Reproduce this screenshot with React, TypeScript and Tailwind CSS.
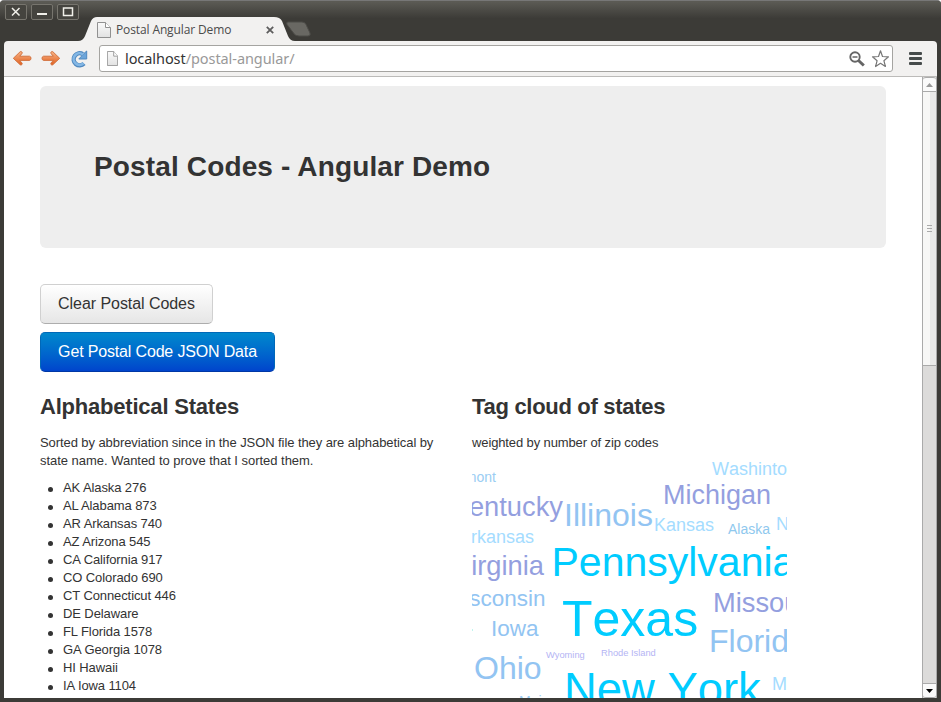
const states = [
  'AK Alaska 276', 'AL Alabama 873', 'AR Arkansas 740', 'AZ Arizona 545', 'CA California 917',
  'CO Colorado 690', 'CT Connecticut 446', 'DE Delaware', 'FL Florida 1578', 'GA Georgia 1078',
  'HI Hawaii', 'IA Iowa 1104',
];

type Tag = { t: string; x: number; y: number; s: number; c: string; end?: boolean };

const tags: Tag[] = [
  { t: 'Vermont', x: 24, y: 32, s: 14, c: '#9bcdf3', end: true },
  { t: 'Washinton', x: 240, y: 25, s: 18, c: '#a4dcff' },
  { t: 'Kentucky', x: 91, y: 66, s: 27.3, c: '#949fdf', end: true },
  { t: 'Michigan', x: 191, y: 54, s: 27, c: '#949fdf' },
  { t: 'Illinois', x: 92, y: 76, s: 32, c: '#92c4f2' },
  { t: 'Kansas', x: 182, y: 81, s: 18, c: '#a4dcff' },
  { t: 'Alaska', x: 256, y: 84, s: 14, c: '#8fc8ee' },
  { t: 'Nevada', x: 304, y: 80, s: 18, c: '#a4dcff' },
  { t: 'Arkansas', x: 62, y: 93, s: 18, c: '#a4dcff', end: true },
  { t: 'Virginia', x: 72, y: 125, s: 27.3, c: '#949fdf', end: true },
  { t: 'Pennsylvania', x: 79.5, y: 126, s: 41, c: '#00ccff' },
  { t: 'Wisconsin', x: 73.5, y: 156, s: 22.5, c: '#92c4f2', end: true },
  { t: 'Texas', x: 90, y: 186, s: 50, c: '#00ccff' },
  { t: 'Missouri', x: 241, y: 162, s: 27.3, c: '#949fdf' },
  { t: 'Iowa', x: 19, y: 186, s: 22.5, c: '#92c4f2' },
  { t: 'Florida', x: 237, y: 202, s: 32, c: '#92c4f2' },
  { t: 'Wyoming', x: 74, y: 208, s: 9.3, c: '#b4b4f4' },
  { t: 'Rhode Island', x: 129, y: 206, s: 9.3, c: '#b4b4f4' },
  { t: 'Ohio', x: 2, y: 229, s: 32, c: '#92c4f2' },
  { t: 'New York', x: 92, y: 255, s: 45.4, c: '#00ccff' },
  { t: 'Montana', x: 300, y: 240, s: 18, c: '#a4dcff' },
  { t: 'Maine', x: 47, y: 256, s: 14, c: '#9bcdf3' },
];

function PageIcon({ className }: { className: string }) {
  return (
    <svg className={className} viewBox="0 0 14 16" preserveAspectRatio="none">
      <defs>
        <linearGradient id="page" x2="0" y2="1">
          <stop stopColor="#fafafa" />
          <stop offset="1" stopColor="#e2e2e2" />
        </linearGradient>
      </defs>
      <path d="M.5.5h8l5 5v10H.5z" fill="url(#page)" stroke="#919191" />
      <path d="M8.500.5v5h5" fill="#fff" stroke="#919191" />
    </svg>
  );
}

function Arrow({ flip }: { flip?: boolean }) {
  return (
    <svg className={flip ? 'size-5 -scale-x-100' : 'size-5'} viewBox="0 0 20 20">
      <defs>
        <linearGradient id="orange" x2="0" y2="1">
          <stop stopColor="#f9b487" />
          <stop offset="1" stopColor="#e0601f" />
        </linearGradient>
      </defs>
      <path d="M8.200 2.700 1.300 9.300l6.900 6.500q1 .6 1.700-.2.700-.8 0-1.700L7.700 11.400h9.800q1.500-.3 1.500-2.100t-1.500-2.100H7.700l2.200-2.500q.7-.9 0-1.700-.7-.9-1.700-.3z" fill="url(#orange)" stroke="#cf6d3a" strokeWidth=".9" strokeLinejoin="round" />
    </svg>
  );
}

function TitleBar() {
  return (
    <header className="relative flex h-[41px] items-start bg-linear-to-b from-[#5b5a54] from-5% to-[#3c3b37] to-45% pl-[5px] pt-[4px]">
      <div className="flex gap-[4px]">
        {['M5 4l7.500 7.500m0-7.500l-7.500 7.500', 'M4 10h10', 'M4.500 4h9v7.500h-9z'].map((d, i) => (
          <svg key={d} className="h-[16px] w-[22px] rounded-[2px] border border-[#77756e] bg-[#45443f]" viewBox="-1 1 20 14">
            <path d={d} fill="none" stroke="#f1f0ea" strokeWidth={i === 1 ? 2 : 1.500} />
          </svg>
        ))}
      </div>
      <svg className="absolute left-[78px] top-[16px] h-[25px] w-[240px]" viewBox="0 0 240 25">
        <path d="M0 25Q5 25 7 20L13 5Q15 1 19 1H196Q202 1 204 5L210 20Q212 25 217 25z" fill="#f2f1f0" />
        <path d="M210 6h14q3 0 4 2.500l4 8.500q1 3-2 3h-9q-4 0-5.500-3l-6.500-8.500q-1-2.500 1-2.500z" fill="#696863" stroke="#4d4c48" />
      </svg>
      <div className="absolute left-[97px] top-[20px] flex h-[20px] w-[180px] items-center">
        <PageIcon className="h-[16px] w-[14px]" />
        <span className="ml-[5px] whitespace-nowrap font-['Open_Sans',sans-serif] text-[12px] tracking-[-0.12px] text-[#4b4b4b]">Postal Angular Demo</span>
        <svg className="ml-auto mr-[3.500px] size-[8px]" viewBox="0 0 7 7"><path d="M.7.7l5.600 5.600m0-5.600L.7 6.300" stroke="#5e5e5e" strokeWidth="1.600" /></svg>
      </div>
    </header>
  );
}

function Toolbar() {
  return (
    <div className="mx-[4px] flex h-[36px] items-center rounded-t-[4px] border-b border-[#bcbbb9] bg-[#f2f1f0] pl-[8px]">
      <Arrow />
      <div className="ml-[9px]"><Arrow flip /></div>
      <svg className="ml-[9px] size-[18px]" viewBox="0 0 18 18">
        <path d="M14 13.500A6 6 0 1 1 12.800 4.200" fill="none" stroke="#5189bf" strokeWidth="4.400" />
        <path d="M16.700 1v8H8.800l2.800-2.900 2.500-2.800z" fill="#6ca5da" stroke="#5189bf" strokeLinejoin="round" />
        <path d="M13.500 13.200A5.800 5.800 0 1 1 13 4.500" fill="none" stroke="#83b7e5" strokeWidth="2.600" />
      </svg>
      <div className="ml-[11px] flex h-[27px] w-[794px] items-center rounded-[3px] border border-[#a5a4a1] bg-white pl-[7px] pr-[3px]">
        <PageIcon className="h-[15px] w-[11px]" />
        <span className="relative top-[-1px] ml-[7px] whitespace-nowrap font-['Noto_Sans',sans-serif] text-[14.500px] tracking-[-0.07px] text-[#999]"><span className="text-[#333]">localhost</span>/postal-angular/</span>
        <svg className="ml-auto size-[16px]" viewBox="0 0 16 16">
          <circle cx="6" cy="6" r="4.700" fill="none" stroke="#656565" strokeWidth="1.900" />
          <path d="M3.500 6h5" stroke="#656565" strokeWidth="1.300" />
          <path d="M9.500 9.500l5.300 5" stroke="#656565" strokeWidth="3" />
        </svg>
        <svg className="ml-[6px] size-[18px]" viewBox="-.500 0 18 18">
          <path d="M9 .8l2 5.700 6 .3-4.600 3.900 1.500 5.800L9 13.300l-4.900 3.200 1.500-5.800L1 6.800l6-.3z" fill="#fff" stroke="#777" strokeLinejoin="round" strokeWidth="1.200" />
        </svg>
      </div>
      <div className="ml-[16px] flex flex-col gap-[2px]">
        <i className="h-[3px] w-[13px] rounded-[1px] bg-[#464b4b]" />
        <i className="h-[3px] w-[13px] rounded-[1px] bg-[#464b4b]" />
        <i className="h-[3px] w-[13px] rounded-[1px] bg-[#464b4b]" />
      </div>
    </div>
  );
}

function Scrollbar() {
  return (
    <div className="flex w-[15px] shrink-0 flex-col border-x border-[#aaa] bg-[#dcdbda]">
      <div className="flex h-[15px] shrink-0 items-center justify-center rounded-t-[3px] border-y border-[#aaa] bg-[#fafafa]">
        <svg className="h-[4px] w-[7px]" viewBox="0 0 7 4"><path d="M3.500 0L7 4H0z" fill="#999" /></svg>
      </div>
      <div className="flex h-[274px] shrink-0 flex-col items-center justify-center gap-[2px] border-b border-[#aaa] bg-linear-to-r from-[#f7f7f6] from-50% to-[#e9e9e8] to-50%">
        <i className="h-px w-[5px] bg-[#aaa]" />
        <i className="h-px w-[5px] bg-[#aaa]" />
        <i className="h-px w-[5px] bg-[#aaa]" />
      </div>
      <div className="mt-auto flex h-[15px] items-center justify-center rounded-b-[3px] border-y border-[#aaa] bg-[#fafafa]">
        <svg className="h-[4px] w-[7px]" viewBox="0 0 7 4"><path d="M3.500 4L7 0H0z" fill="#000" /></svg>
      </div>
    </div>
  );
}

export default function App() {
  return (
    <div className="flex h-[702px] w-[941px] flex-col overflow-hidden rounded-t-[4px] border-t border-[#777] bg-[#3c3b37] font-['Liberation_Sans',Arial,sans-serif] text-[13px] leading-[18px] text-[#333]">
      <div className="-mt-px"><TitleBar /></div>
      <Toolbar />
      <div className="mx-[4px] flex h-[621px] overflow-hidden bg-white">
        <main className="min-w-0 flex-1 pl-[36px] pt-[9px]">
          <section className="flex h-[162px] w-[846px] items-center rounded-[6px] bg-[#eee] pl-[54px]">
            <h1 className="text-[28px] font-bold leading-9 tracking-[0.14px]">Postal Codes - Angular Demo</h1>
          </section>
          <div className="mt-[36px] flex flex-col items-start gap-[8px] text-[16px] leading-5">
            <button className="h-[40px] w-[173px] whitespace-nowrap rounded-[5px] border border-[#d0d0d0] border-b-[#adadad] bg-linear-to-b from-white to-[#e6e6e6] tracking-[-0.06px]">Clear Postal Codes</button>
            <button className="h-[40px] w-[235px] whitespace-nowrap rounded-[5px] border border-[#0068b8] border-b-[#0037a5] bg-linear-to-b from-[#0088cc] to-[#0044cc] tracking-[-0.16px] text-white">Get Postal Code JSON Data</button>
          </div>
          <div className="mt-[17px] flex">
            <section className="w-[432px]">
              <h3 className="text-[22px] font-bold leading-9 tracking-[-0.21px]">Alphabetical States</h3>
              <p className="mt-[9px] w-[402px] tracking-[-0.08px]">Sorted by abbreviation since in the JSON file they are alphabetical by<br /><span className="tracking-[-0.03px]">state name. Wanted to prove that I sorted them.</span></p>
              <ul className="mt-[9px] tracking-[-0.1px]">
                {states.map((s) => (
                  <li key={s} className="flex items-center">
                    <i className="ml-[8px] mr-[10px] mt-[2px] size-[5px] rounded-full bg-[#333]" />
                    {s}
                  </li>
                ))}
              </ul>
            </section>
            <section>
              <h3 className="text-[22px] font-bold leading-9 tracking-[-0.3px]">Tag cloud of states</h3>
              <p className="mt-[9px] tracking-[-0.12px]">weighted by number of zip codes</p>
              <svg className="mt-[-2px] block h-[260px] w-[315px] overflow-hidden [font-kerning:none]" viewBox="0 -10 315 260">
                {tags.map((g) => (
                  <text key={g.t} x={g.x} y={g.y - 10} fontSize={g.s} fill={g.c} textAnchor={g.end ? 'end' : 'start'}>{g.t}</text>
                ))}
                <rect y="169" width="1" height="2" fill="#bff5ee" />
              </svg>
            </section>
          </div>
        </main>
        <Scrollbar />
      </div>
    </div>
  );
}
